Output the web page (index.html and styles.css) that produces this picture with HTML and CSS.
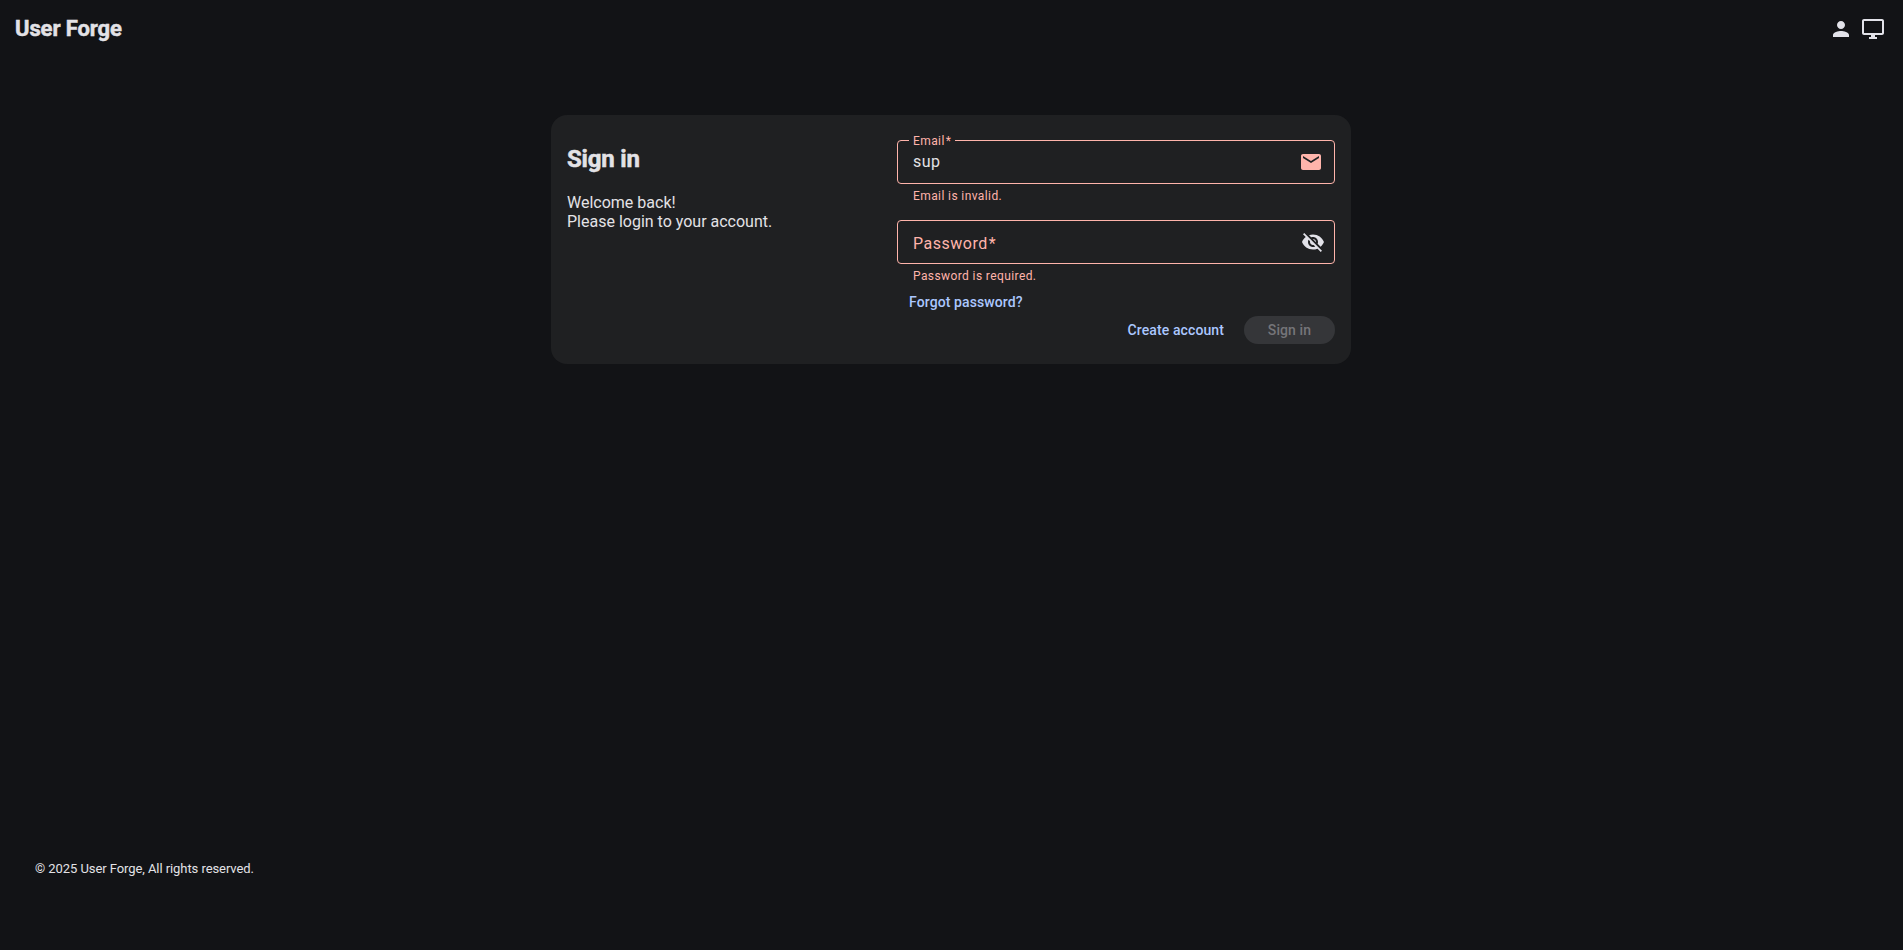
FILE: index.html
```html
<!DOCTYPE html>
<html lang="en">
<head>
<meta charset="utf-8">
<title>User Forge</title>
<link rel="stylesheet" href="styles.css">
</head>
<body>
<header class="toolbar">
  <h1 class="brand">User Forge</h1>
  <nav class="actions">
    <svg class="icon" viewBox="0 0 24 24"><path d="M12 12c2.21 0 4-1.79 4-4s-1.79-4-4-4-4 1.79-4 4 1.790 4 4 4zm0 2c-2.67 0-8 1.340-8 4v2h16v-2c0-2.660-5.330-4-8-4z"/></svg>
    <svg class="icon" viewBox="0 0 24 24"><path d="M21 2H3c-1.100 0-2 .9-2 2v12c0 1.100.9 2 2 2h7v2H8v2h8v-2h-2v-2h7c1.100 0 2-.9 2-2V4c0-1.100-.9-2-2-2zm0 14H3V4h18v12z"/></svg>
  </nav>
</header>
<main class="content">
  <section class="card">
    <div class="intro">
      <h2 class="title">Sign in</h2>
      <p class="welcome">Welcome back!<br>Please login to your account.</p>
    </div>
    <form class="form">
      <div class="field">
        <div class="outline">
          <span class="float-label">Email<span class="star">*</span></span>
          <span class="value">sup</span>
          <svg class="icon mail" viewBox="0 0 24 24"><path d="M20 4H4c-1.100 0-1.990.9-1.990 2L2 18c0 1.100.9 2 2 2h16c1.100 0 2-.9 2-2V6c0-1.100-.9-2-2-2zm0 4l-8 5-8-5V6l8 5 8-5v2z"/></svg>
        </div>
        <div class="error">Email is invalid.</div>
      </div>
      <div class="field">
        <div class="outline">
          <span class="label">Password<span class="star">*</span></span>
          <svg class="icon eye" viewBox="0 0 24 24"><path d="M12 7c2.760 0 5 2.240 5 5 0 .65-.13 1.260-.36 1.830l2.920 2.920c1.510-1.260 2.700-2.890 3.430-4.750-1.730-4.390-6-7.500-11-7.500-1.400 0-2.740.25-3.980.7l2.160 2.160C10.740 7.130 11.350 7 12 7zM2 4.270l2.280 2.280.46.46C3.080 8.300 1.780 10.020 1 12c1.730 4.390 6 7.500 11 7.500 1.550 0 3.030-.3 4.380-.84l.42.42L19.730 22 21 20.730 3.270 3 2 4.270zM7.530 9.800l1.550 1.550c-.05.21-.08.43-.08.65 0 1.660 1.340 3 3 3 .22 0 .44-.03.65-.08l1.550 1.550c-.67.33-1.410.53-2.200.53-2.760 0-5-2.240-5-5 0-.79.2-1.530.53-2.200zm4.310-.78l3.150 3.150.02-.16c0-1.660-1.340-3-3-3l-.17.01z"/></svg>
        </div>
        <div class="error">Password is required.</div>
      </div>
      <a class="link forgot">Forgot password?</a>
      <div class="buttons">
        <a class="link">Create account</a>
        <button class="submit" type="button" disabled>Sign in</button>
      </div>
    </form>
  </section>
</main>
<footer class="footer">© 2025 User Forge, All rights reserved.</footer>
</body>
</html>
```
FILE: styles.css
```css
* { box-sizing: border-box; }
body {
  margin: 0;
  height: 100vh;
  display: flex;
  flex-direction: column;
  background: #121316;
  color: #e3e2e6;
  font: 400 16px/19px Roboto, sans-serif;
}
h1, h2, p { margin: 0; }
.icon { width: 24px; height: 24px; fill: #e2e2e9; flex: none; display: block; }
.toolbar {
  height: 56px;
  padding: 0 18px 0 15px;
  display: flex;
  justify-content: space-between;
}
.brand { font-size: 22px; line-height: 57px; font-weight: 700; letter-spacing: -0.1px; -webkit-text-stroke: 0.5px; }
.actions { display: flex; gap: 8px; padding-top: 17px; }
.content { flex: 1; padding-top: 59px; }
.card {
  width: 800px;
  height: 249px;
  margin: 0 auto;
  padding: 25px 16px 0;
  display: flex;
  justify-content: space-between;
  position: relative;
  left: -0.5px;
  background: #1f2022;
  border-radius: 16px;
}
.title { font-size: 24px; line-height: 38px; font-weight: 700; letter-spacing: -0.2px; -webkit-text-stroke: 0.5px; }
.welcome { margin-top: 15px; }
.form { width: 438px; }
.field { height: 80px; color: #ffb4ab; }
.outline {
  position: relative;
  height: 44px;
  padding: 0 9px 0 15px;
  display: flex;
  align-items: center;
  justify-content: space-between;
  border: 1px solid #ffb4ab;
  border-radius: 4px;
}
.float-label {
  position: absolute;
  left: 11px;
  top: -9px;
  padding: 0 4px;
  background: #1f2022;
  font-size: 12px;
  line-height: 18px;
  letter-spacing: 0.4px;
}
.star { margin-left: 1px; }
.value { color: #e3e2e6; letter-spacing: 0.5px; padding-bottom: 2px; }
.label { letter-spacing: 0.5px; padding-top: 2px; }
.mail { margin-right: 2px; fill: #ffb4ab; }
.error { padding: 4px 16px 0; font-size: 12px; line-height: 16px; letter-spacing: 0.4px; }
.link { color: #abc7ff; font-size: 14px; font-weight: 500; line-height: 20px; letter-spacing: 0.1px; }
.forgot { display: block; margin: -8px 0 0 12px; }
.buttons { display: flex; align-items: center; justify-content: flex-end; gap: 20px; margin-top: 4px; }
.submit {
  width: 91px;
  height: 28px;
  padding: 0;
  border: 0;
  border-radius: 14px;
  background: #353639;
  color: #757579;
  font: 500 14px/28px Roboto, sans-serif;
  letter-spacing: 0.1px;
}
.footer { height: 91px; padding-left: 35px; font-size: 13px; line-height: 19px; letter-spacing: -0.07px; }
```
